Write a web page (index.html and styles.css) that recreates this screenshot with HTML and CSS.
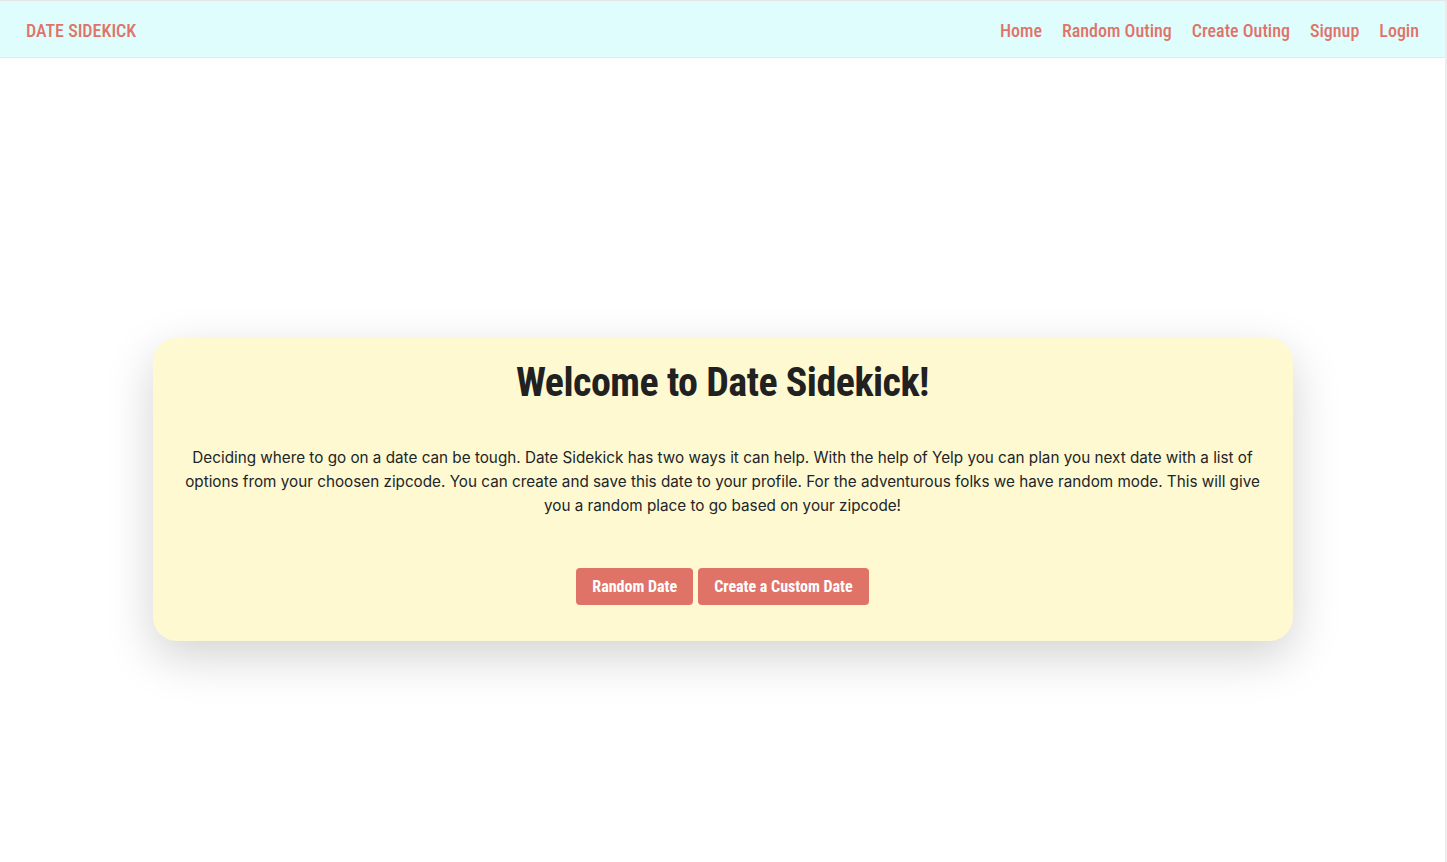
FILE: index.html
```html
<!DOCTYPE html>
<html lang="en">
<head>
<meta charset="utf-8">
<title>Date Sidekick</title>
<link rel="stylesheet" href="styles.css">
</head>
<body>
<div class="page">
  <nav class="navbar">
    <a class="brand" href="#">DATE SIDEKICK</a>
    <ul class="nav-links">
      <li><a href="#">Home</a></li>
      <li><a href="#">Random Outing</a></li>
      <li><a href="#">Create Outing</a></li>
      <li><a href="#">Signup</a></li>
      <li><a href="#">Login</a></li>
    </ul>
  </nav>
  <main class="main">
    <section class="card">
      <h1 class="title">Welcome to Date Sidekick!</h1>
      <p class="intro">Deciding where to go on a date can be tough. Date Sidekick has two ways it can help. With the help of Yelp you can plan you next date with a list of options from your choosen zipcode. You can create and save this date to your profile. For the adventurous folks we have random mode. This will give you a random place to go based on your zipcode!</p>
      <div class="actions">
        <a class="btn" href="#">Random Date</a>
        <a class="btn" href="#">Create a Custom Date</a>
      </div>
    </section>
  </main>
</div>
</body>
</html>
```

FILE: styles.css
```css
* { box-sizing: border-box; }
html, body { margin: 0; padding: 0; background: #fff; }
body {
  font-family: "Inter", "Liberation Sans", Arial, sans-serif;
  font-size: 15.25px;
  line-height: 24px;
  color: #212529;
}
.page {
  height: 862px;
  border-top: 1px solid #e6e6e6;
  border-right: 2px solid #ececec;
  overflow: hidden;
}
.navbar {
  height: 57px;
  background: #e0fdfe;
  border-bottom: 1px solid #e3eaea;
  display: flex;
  align-items: center;
  justify-content: space-between;
  padding: 4px 26px 0;
}
.brand, .nav-links a, .btn, .title {
  font-family: "Roboto", "DejaVu Sans Condensed", sans-serif;
  font-stretch: 75%;
}
.brand {
  color: #e07368;
  font-size: 18px;
  font-weight: 500;
  text-decoration: none;
}
.nav-links {
  display: flex;
  gap: 20px;
  list-style: none;
  margin: 0;
  padding: 0;
}
.nav-links a {
  color: #e07368;
  font-size: 18px;
  font-weight: 500;
  text-decoration: none;
}
.main {
  padding-top: 280px;
  display: flex;
  justify-content: center;
}
.card {
  width: 1140px;
  background: #fef9d0;
  border-radius: 24px;
  box-shadow: 0 16px 48px rgba(0, 0, 0, 0.175);
  padding: 16px 24px 36px;
  text-align: center;
}
.title {
  margin: 0 0 34px;
  font-size: 40px;
  line-height: 58px;
  font-weight: bold;
  letter-spacing: -0.5px;
  color: #212121;
}
.intro {
  margin: 0 0 50px;
}
.actions {
  display: flex;
  justify-content: center;
  gap: 5px;
}
.btn {
  display: inline-block;
  background: #e07368;
  color: #fff;
  font-size: 16px;
  font-weight: bold;
  line-height: 37px;
  height: 37px;
  padding: 0 16px;
  border-radius: 4px;
  text-decoration: none;
}
```
